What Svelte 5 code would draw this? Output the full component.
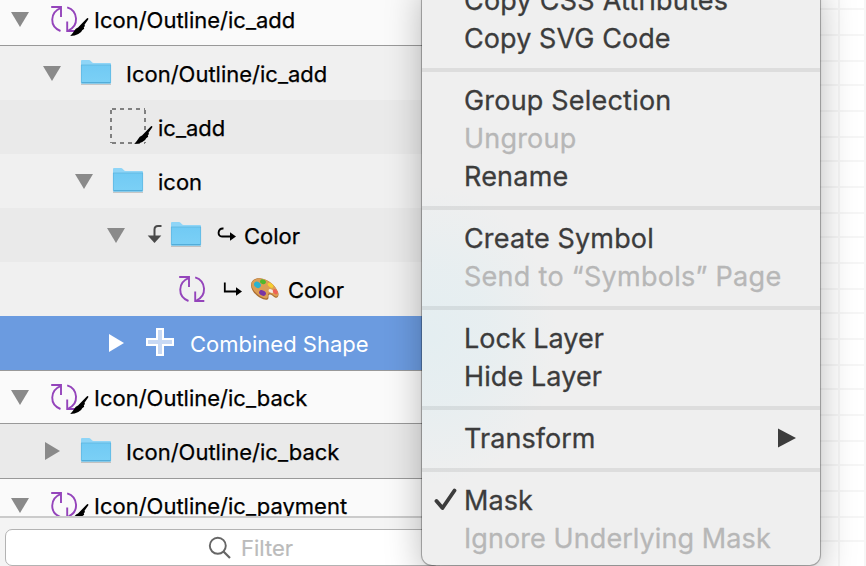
<script>
  const layers = [
    { kind: 'master', text: 'Icon/Outline/ic_add', indent: 9, open: true, page: true, line: true },
    { kind: 'folder', text: 'Icon/Outline/ic_add', indent: 41, open: true },
    { kind: 'slice', text: 'ic_add', indent: 73, alt: true },
    { kind: 'folder', text: 'icon', indent: 73, open: true },
    { kind: 'masked', text: 'Color', indent: 105, open: true, alt: true },
    { kind: 'symbol', text: 'Color', indent: 137 },
    { kind: 'shape', text: 'Combined Shape', indent: 105, closed: true, selected: true },
    { kind: 'master', text: 'Icon/Outline/ic_back', indent: 9, open: true, page: true, line: true },
    { kind: 'folder', text: 'Icon/Outline/ic_back', indent: 41, closed: true, alt: true },
    { kind: 'master', text: 'Icon/Outline/ic_payment', indent: 9, open: true, page: true }
  ];

  const groups = [
    [{ text: 'Copy CSS Attributes', track: 0.22 }, { text: 'Copy SVG Code', track: 0.08 }],
    [{ text: 'Group Selection', track: 0.2 }, { text: 'Ungroup', off: true, track: 0.2 }, { text: 'Rename', track: 0.2 }],
    [{ text: 'Create Symbol', track: 0.15 }, { text: 'Send to “Symbols” Page', off: true, track: 0.28 }],
    [{ text: 'Lock Layer', track: 0 }, { text: 'Hide Layer', track: 0.1 }],
    [{ text: 'Transform', sub: true, track: 0.05 }],
    [{ text: 'Mask', checked: true, track: 0.1 }, { text: 'Ignore Underlying Mask', off: true, track: 0.08 }]
  ];
</script>

{#snippet folder()}
  <svg class="folder" width="32" height="28" viewBox="0 0 32 28">
    <path d="M1 26.2H31" stroke="#000" stroke-opacity=".22" stroke-width="1.2" />
    <path d="M1 24.5V3Q1 2 2 2H9Q10 2 10.8 3L12 4.3Q12.5 5 13.5 5H30Q31 5 31 6V24.5Q31 25.5 30 25.5H2Q1 25.5 1 24.5Z" fill="#8fd5f7" />
    <path d="M1 7H31V24.5Q31 25.5 30 25.5H2Q1 25.5 1 24.5Z" fill="url(#folderFront)" />
    <path d="M1 7H31" stroke="#61b7e0" stroke-width=".8" />
    <path d="M1.5 24.7H30.5" stroke="#4ba6d2" stroke-width="1" />
    <path d="M1.4 7V24.5M30.6 7V24.5" stroke="#5cb4df" stroke-width=".7" />
  </svg>
{/snippet}

{#snippet cycle()}
  <g fill="none" stroke="#9444bb" stroke-width="1.9">
    <path d="M1.2 2H11V12" />
    <path d="M10.5 3.2C0 7.5-1 21.500 10.500 26" />
    <path d="M26.300 26H17.200V16.500" />
    <path d="M17.200 2.300C28.500 6 29 21 18.500 25.300" />
  </g>
{/snippet}

{#snippet knife(x, y)}
  <path
    transform="translate({x} {y})"
    d="M18.200.2Q17.500-.3 16.500.7L8 9.500Q5.500 10.200 4.300 12.800Q3 15.300.2 18Q5 18 8.300 16Q11.500 14.500 12.200 12.200L14.200 10.800L13.800 9.200L15 8L14.500 6.800L18 1.800Q18.700.8 18.200.2Z"
    fill="#000"
  />
{/snippet}

<div class="screen">
  <section class="sidebar">
    <div class="layers">
      {#each layers as l}
        <div
          class="row {l.kind}"
          class:alt={l.alt}
          class:page={l.page}
          class:line={l.line}
          class:selected={l.selected}
          style="padding-left: {l.indent}px"
        >
          <span class="toggle">
            {#if l.open}
              <svg width="22" height="18" viewBox="0 0 22 18"><path d="M2 2H20L11 17Z" /></svg>
            {:else if l.closed}
              <svg width="22" height="20" viewBox="0 0 22 20"><path d="M4 1V19L19 10Z" /></svg>
            {/if}
          </span>
          {#if l.kind === 'master'}
            <svg class="glyph" width="44" height="36" viewBox="0 0 44 36">
              <g transform="translate(0 4)">{@render cycle()}</g>
              {@render knife(20, 17)}
            </svg>
          {:else if l.kind === 'folder'}
            {@render folder()}
          {:else if l.kind === 'slice'}
            <svg class="glyph" width="44" height="40" viewBox="0 0 44 40">
              <path d="M2 3H36M36 3V37M2 37H36M2 3V37" fill="none" stroke="#808080" stroke-width="2" stroke-dasharray="4 4" stroke-dashoffset="-1" />
              {@render knife(25, 20)}
            </svg>
          {:else if l.kind === 'masked'}
            <svg class="maskarrow" width="16" height="20" viewBox="0 0 16 20">
              <path d="M14.500 2H11Q7.500 2 7.500 5.500V13" fill="none" stroke="#4a4a4a" stroke-width="2" />
              <path d="M.7 11.500H14.300L7.500 19Z" fill="#4a4a4a" />
            </svg>
            {@render folder()}
            <svg class="hook" width="20" height="16" viewBox="0 0 20 16">
              <path d="M6.500 1.500C.5 1 0 9.500 5 9.500H15" fill="none" stroke="#000" stroke-width="1.900" />
              <path d="M13 5.300L19 9.500L13 13.700Z" />
            </svg>
          {:else if l.kind === 'symbol'}
            <svg class="glyph" width="30" height="28" viewBox="0 0 30 28">{@render cycle()}</svg>
            <svg class="corner" width="20" height="16" viewBox="0 0 20 16">
              <path d="M1.800.5V9.500H15" fill="none" stroke="#000" stroke-width="1.800" />
              <path d="M13 5.300L19 9.500L13 13.700Z" />
            </svg>
            <svg class="palette" width="30" height="24" viewBox="0 0 30 24">
              <path d="M1 8C1 3 6 .8 11 1.500C18 2.300 25 8 28 15C29.500 19 27.500 21.800 25 20.500C22.500 19 21.500 17 19.500 17.500C17.500 18.200 19.500 21 17.500 22.500C14 24.500 1 17 1 8Z" fill="#a96c2e" />
              <path d="M1.300 7C2 3 6.500 1 11 1.500C18 2.300 25 8 27.700 14.500C29 18 27.500 20.500 25 19.200C22.500 17.500 21.500 15.800 19.300 16.300C16.800 17 19 20 17 21.300C13 22.500 1.500 15 1.300 7Z" fill="#dc9e55" />
              <ellipse cx="21" cy="14" rx="2.600" ry="1.700" fill="#f4eee6" transform="rotate(20 21 14)" />
              <ellipse cx="7.500" cy="7.800" rx="3.600" ry="2.900" fill="#2bb3cf" transform="rotate(35 7.500 7.800)" />
              <ellipse cx="13" cy="4.800" rx="3" ry="2.300" fill="#50b82c" transform="rotate(20 13 4.800)" />
              <ellipse cx="20.500" cy="8.300" rx="3.200" ry="1.900" fill="#f5cf30" transform="rotate(38 20.500 8.300)" />
              <ellipse cx="25.300" cy="14.800" rx="2.900" ry="2" fill="#ee6258" transform="rotate(50 25.300 14.800)" />
              <ellipse cx="12.500" cy="16" rx="3.600" ry="2.500" fill="#7834a5" transform="rotate(25 12.500 16)" />
            </svg>
          {:else}
            <svg class="glyph" width="28" height="28" viewBox="0 0 28 28">
              <path d="M11 1H17V11H27V17H17V27H11V17H1V11H11Z" fill="#c8d9f4" stroke="#fff" stroke-width="2" />
            </svg>
          {/if}
          <span class="name">{l.text}</span>
        </div>
      {/each}
    </div>
    <div class="filterbar">
      <div class="field">
        <svg width="24" height="24" viewBox="0 0 24 24">
          <circle cx="9.800" cy="9.800" r="8" fill="none" stroke="#666" stroke-width="1.900" />
          <path d="M15.500 15.500L22 22" stroke="#666" stroke-width="2.200" />
        </svg>
        <span>Filter</span>
      </div>
    </div>
  </section>

  <div class="canvas"></div>

  <div class="menu">
    {#each groups as group, g}
      {#if g > 0}<div class="separator"></div>{/if}
      {#each group as item}
        <div class="item" class:off={item.off}>
          <span class="check">
            {#if item.checked}
              <svg width="24" height="24" viewBox="0 0 24 24">
                <path d="M2.500 13L8.500 20L20.500 2.500" fill="none" stroke="#3c3c3c" stroke-width="3.800" stroke-linecap="round" stroke-linejoin="round" />
              </svg>
            {/if}
          </span>
          <span class="label" style="letter-spacing: {item.track}px">{item.text}</span>
          {#if item.sub}
            <svg class="submenu" width="18" height="20" viewBox="0 0 18 20"><path d="M0 .5V19.500L18 10Z" fill="#3c3c3c" /></svg>
          {/if}
        </div>
      {/each}
    {/each}
  </div>

  <svg class="defs" width="0" height="0">
    <linearGradient id="folderFront" x1="0" y1="0" x2="0" y2="1">
      <stop offset="0" stop-color="#71caf4" />
      <stop offset="1" stop-color="#7bd0f6" />
    </linearGradient>
  </svg>
</div>

<style>
  :global(body) {
    margin: 0;
    overflow: hidden;
  }
  .screen {
    position: relative;
    display: flex;
    width: 866px;
    height: 566px;
    overflow: hidden;
    background: #fff;
    font-family: Inter, 'Liberation Sans', sans-serif;
  }
  svg {
    display: block;
    flex: none;
  }
  .defs {
    position: absolute;
  }
  .sidebar {
    display: flex;
    flex-direction: column;
    width: 440px;
    flex: none;
    background: #f4f4f4;
  }
  .layers {
    height: 516px;
    overflow: hidden;
  }
  .row {
    box-sizing: border-box;
    display: flex;
    align-items: center;
    height: 54px;
    background: #f0f0f0;
    color: #000;
    font-size: 22px;
    white-space: nowrap;
  }
  .name {
    padding-top: 2px;
    -webkit-text-stroke: 0.25px currentColor;
  }
  .row:first-child {
    margin-top: -8px;
  }
  .alt {
    background: #eaeaea;
  }
  .page {
    background: #fafafa;
  }
  .line {
    box-shadow: inset 0 -1px #999;
  }
  .selected {
    background: #6b9be0;
    color: #fff;
  }
  .selected .name {
    -webkit-text-stroke: 0;
  }
  .selected + .row {
    box-shadow: inset 0 1px #999, inset 0 -1px #999;
  }
  .row:last-child {
    box-shadow: inset 0 1px #999;
  }
  .toggle {
    width: 22px;
    flex: none;
    fill: #8a8a8a;
  }
  .selected .toggle {
    fill: #fff;
  }
  .master .glyph {
    margin: 0 0 0 19px;
  }
  .folder:is(.row) .toggle {
    margin-right: 17px;
  }
  .folder .name {
    margin-left: 14px;
  }
  svg.folder {
    margin-top: -3px;
  }
  .slice .glyph {
    margin-left: 14px;
    margin-top: -3px;
  }
  .slice .name {
    margin-left: 5px;
  }
  .masked .toggle {
    margin-right: 20px;
  }
  .masked .maskarrow {
    margin: -2px 7px 0 0;
  }
  .hook {
    margin-left: 15px;
  }
  .hook + .name {
    margin-left: 7px;
  }
  .symbol .glyph {
    margin-left: 19px;
    margin-top: -1px;
  }
  .corner {
    margin: 1px 0 0 15px;
  }
  .palette {
    margin: -1px 0 0 7px;
  }
  .palette + .name {
    margin-left: 8px;
  }
  .shape .glyph {
    margin: -3px 16px 0 19px;
  }
  .filterbar {
    box-sizing: border-box;
    height: 50px;
    padding: 11px 0 0 5px;
    border-top: 2px solid #cbcbcb;
  }
  .field {
    box-sizing: border-box;
    display: flex;
    align-items: center;
    height: 37px;
    padding-left: 202px;
    gap: 9px;
    border: 1px solid #b3b3b3;
    border-radius: 7px;
    background: #fff;
    color: #bbb;
    font-size: 22px;
    -webkit-text-stroke: 0.2px currentColor;
  }
  .canvas {
    flex: 1;
    background:
      repeating-linear-gradient(to bottom, transparent 0 8px, #f6f6f6 8px 10px, transparent 10px 34px, #f6f6f6 34px 36px, transparent 36px 60px, #f6f6f6 60px 62px, transparent 62px 76px),
      repeating-linear-gradient(to right, transparent 0 398px, #f6f6f6 398px 400px, transparent 400px 424px, #f6f6f6 424px 426px);
  }
  .menu {
    position: absolute;
    left: 422px;
    top: -19px;
    width: 398px;
    height: 584px;
    border-radius: 0 0 10px 10px;
    background:
      radial-gradient(ellipse 125px 150px at 10px 355px, #e4eef1, rgba(228, 238, 241, 0.7) 45%, rgba(239, 239, 239, 0)),
      #efefef;
    box-shadow:
      0 0 0 1px rgba(0, 0, 0, 0.25),
      0 0 3px rgba(0, 0, 0, 0.15),
      0 10px 36px rgba(0, 0, 0, 0.27);
  }
  .item {
    display: flex;
    align-items: center;
    height: 38px;
    color: #3c3c3c;
    font-size: 27px;
    white-space: nowrap;
    -webkit-text-stroke: 0.3px currentColor;
  }
  .off {
    color: #b7b7b7;
  }
  .check {
    width: 30px;
    padding-left: 12px;
    flex: none;
  }
  .submenu {
    margin: 0 24px 0 auto;
  }
  .separator {
    height: 4px;
    margin: 11px 0 9px;
    background: rgba(0, 0, 0, 0.075);
  }
</style>
